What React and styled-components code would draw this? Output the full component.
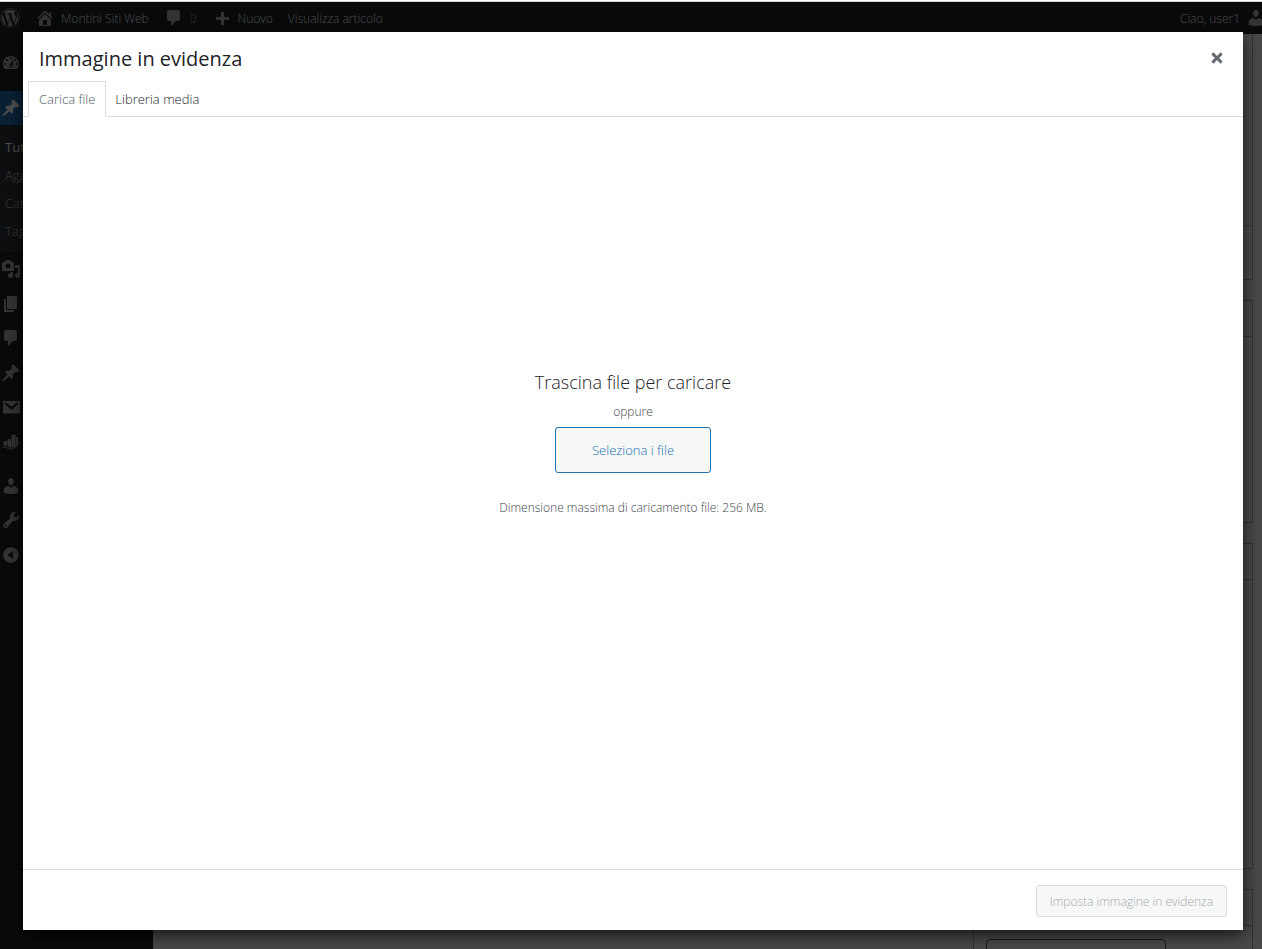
import styled, { createGlobalStyle } from "styled-components";
import { FaWordpress } from "react-icons/fa";

const paths = {
  dashboard:
    "M3.76 16h12.48c1.1-1.37 1.76-3.11 1.76-5 0-4.42-3.58-8-8-8s-8 3.58-8 8c0 1.89.66 3.63 1.76 5zM10 4c.55 0 1 .45 1 1s-.45 1-1 1-1-.45-1-1 .45-1 1-1zM6 6c.55 0 1 .45 1 1s-.45 1-1 1-1-.45-1-1 .45-1 1-1zm8 0c.55 0 1 .45 1 1s-.45 1-1 1-1-.45-1-1 .45-1 1-1zm-5.37 5.55L12 7v6c0 1.1-.9 2-2 2s-2-.9-2-2c0-.57.24-1.08.63-1.45zM4 10c.55 0 1 .45 1 1s-.45 1-1 1-1-.45-1-1 .45-1 1-1zm12 0c.55 0 1 .45 1 1s-.45 1-1 1-1-.45-1-1 .45-1 1-1zm-5 3c0-.55-.45-1-1-1s-1 .45-1 1 .45 1 1 1 1-.45 1-1z",
  pin: "M10.44 3.02l1.82-1.82 6.36 6.35-1.83 1.82c-1.05-.68-2.48-.57-3.41.36l-.75.75c-.92.93-1.04 2.35-.35 3.41l-1.83 1.82-2.41-2.41-2.8 2.79c-.42.42-3.38 2.71-3.8 2.29s1.86-3.39 2.28-3.81l2.79-2.79L4.1 9.36l1.83-1.82c1.05.69 2.48.57 3.4-.36l.75-.75c.93-.92 1.05-2.35.36-3.41z",
  media:
    "M13 11V4c0-.55-.45-1-1-1h-1.67L9 1H5L3.67 3H2c-.55 0-1 .45-1 1v7c0 .55.45 1 1 1h10c.55 0 1-.45 1-1zM7 4.5c1.38 0 2.5 1.12 2.5 2.5S8.38 9.5 7 9.5 4.5 8.38 4.5 7 5.62 4.5 7 4.5zM14 6h5v10.5c0 1.38-1.12 2.5-2.5 2.5S14 17.88 14 16.5s1.12-2.5 2.5-2.5c.17 0 .34.02.5.05V9h-3V6zm-4 8.05V13h2v3.5c0 1.38-1.12 2.5-2.5 2.5S7 17.88 7 16.5 8.12 14 9.5 14c.17 0 .34.02.5.05z",
  pages: "M6 15V2h10v13H6zm-1 1h8v2H3V5h2v11z",
  comments:
    "M5 2h9c1.1 0 2 .9 2 2v7c0 1.1-.9 2-2 2h-2l-5 5v-5H5c-1.1 0-2-.9-2-2V4c0-1.1.9-2 2-2z",
  mail: "M2 4h17v12.500H2zM10.500 12.800l7-5.900-1-1.600-6 4.300-6-4.300-1 1.600z",
  chart:
    "M2.500 9.200h3.600v4.800c-1.200-.3-2.400-.2-3.600.2zM6.600 7.200h3.500v8.700c-1.200-.2-2.200-1.200-3.500-1.700zM10.600 4c0-.8.4-1.300 1.200-1.300h1.600c.8 0 1.200.5 1.200 1.300v9.200c-1.300 1.100-2.500 2-4 2.600zM15.100 5h1.200c.5 0 .8.3.8.8v5.400l-2 1.500zM0 16.800c1.800-2.300 4.200-2.700 6.400-1.200 2.300 1.600 4.300 1.400 6.600-.6 2.300-2 3.600-4 7-4.200-1.800 1.300-3.200 2.900-4.900 4.300-3.200 2.700-6.100 3.300-9.300 1.100-1.900-1.200-3.700-.7-5.800.6z",
  users:
    "M10 9.25c-2.27 0-2.73-3.44-2.73-3.44C7 4.02 7.82 2 9.97 2c2.16 0 2.98 2.02 2.71 3.81 0 0-.41 3.44-2.68 3.44zm0 2.57L12.72 10c2.39 0 4.52 2.33 4.52 4.53v2.49s-3.65 1.13-7.24 1.13c-3.65 0-7.24-1.13-7.24-1.13v-2.49c0-2.25 1.94-4.48 4.47-4.48z",
  tools:
    "M16.68 9.77c-1.34 1.34-3.3 1.67-4.95.99l-5.41 6.52c-.99.99-2.59.99-3.58 0s-.99-2.59 0-3.57l6.52-5.42c-.68-1.65-.35-3.61.99-4.95 1.28-1.28 3.12-1.62 4.72-1.06l-2.89 2.89 2.82 2.82 2.86-2.87c.53 1.58.18 3.39-1.08 4.65zM3.81 16.21c.4.39 1.04.39 1.43 0 .4-.4.4-1.04 0-1.43-.39-.4-1.03-.4-1.43 0-.39.39-.39 1.03 0 1.43z",
  collapse:
    "M10 2.16c4.33 0 7.84 3.51 7.84 7.84s-3.51 7.84-7.84 7.84S2.16 14.33 2.16 10 5.71 2.16 10 2.16zm2 11.72V6.12L6.18 9.97z",
  home: "M16 8.5l1.53 1.53-1.06 1.06L10 4.6l-6.47 6.49-1.06-1.06L10 2.5l4 4v-2h2v4zm-6-2.46l6 5.99V18H4v-5.97zM12 17v-5H8v5h4z",
  plus: "M17 9v3h-5v5H9v-5H4V9h5V4h3v5z",
  close:
    "M12.12 10l3.53 3.53-2.12 2.12L10 12.12l-3.54 3.54-2.12-2.12L7.88 10 4.34 6.46l2.12-2.12L10 7.88l3.54-3.53 2.12 2.12z",
};

const Icon = ({ name }) => (
  <Glyph viewBox="0 0 20 20" aria-hidden="true">
    <path d={paths[name]} fillRule="evenodd" />
  </Glyph>
);

const mainMenu = [
  ["media", "Media"],
  ["pages", "Pagine"],
  ["comments", "Commenti"],
  ["pin", "Progetti"],
  ["mail", "Contatti"],
  ["chart", "Statistiche"],
];

const toolsMenu = [
  ["users", "Utenti"],
  ["tools", "Strumenti"],
  ["collapse", "Riduci menu"],
];

const App = () => {
  return (
    <Page>
      <GlobalStyle />
      <TopEdge />
      <AdminBar>
        <BarLink href="#wordpress" aria-label="WordPress">
          <FaWordpress size={20} />
        </BarLink>
        <BarLink href="#sito">
          <Icon name="home" />
          <span>Montini Siti Web</span>
        </BarLink>
        <BarLink href="#commenti">
          <Icon name="comments" />
          <Count>0</Count>
        </BarLink>
        <BarLink href="#nuovo">
          <Icon name="plus" />
          <span>Nuovo</span>
        </BarLink>
        <BarLink href="#articolo">
          <span>Visualizza articolo</span>
        </BarLink>
        <Account href="#profilo">
          <span>Ciao, user1</span>
          <Icon name="users" />
        </Account>
      </AdminBar>

      <Body>
        <SideMenu>
          <MenuItem href="#bacheca" aria-label="Bacheca">
            <Icon name="dashboard" />
          </MenuItem>
          <Separator />
          <MenuItem href="#articoli" aria-label="Articoli" $active>
            <Icon name="pin" />
          </MenuItem>
          <SubMenu>
            <SubLink href="#tutti" $current>
              Tutti gli articoli
            </SubLink>
            <SubLink href="#aggiungi">Aggiungi nuovo</SubLink>
            <SubLink href="#categorie">Categorie</SubLink>
            <SubLink href="#tag">Tag</SubLink>
          </SubMenu>
          <MenuGroup $height={207}>
            {mainMenu.map(([icon, label]) => (
              <MenuItem key={label} href={"#" + icon} aria-label={label}>
                <Icon name={icon} />
              </MenuItem>
            ))}
          </MenuGroup>
          <Separator />
          <MenuGroup $height={103}>
            {toolsMenu.map(([icon, label]) => (
              <MenuItem key={label} href={"#" + icon} aria-label={label}>
                <Icon name={icon} />
              </MenuItem>
            ))}
          </MenuGroup>
        </SideMenu>
        <Editor>
          <MetaColumn>
            <MetaBox $height={246} $first>
              <MetaHead $height={192} />
            </MetaBox>
            <MetaBox $height={223}>
              <MetaHead $height={36} />
            </MetaBox>
            <MetaBox $height={326}>
              <MetaHead $height={36} />
            </MetaBox>
            <MetaBox $height={225}>
              <MetaHead $height={36} />
              <MetaInput type="text" aria-label="Nuovo tag" />
            </MetaBox>
          </MetaColumn>
        </Editor>
      </Body>

      <Backdrop>
        <Modal role="dialog" aria-labelledby="modal-title">
          <ModalHeader>
            <Title id="modal-title">Immagine in evidenza</Title>
            <CloseButton type="button" aria-label="Chiudi">
              <Icon name="close" />
            </CloseButton>
          </ModalHeader>
          <Tabs role="tablist">
            <Tab type="button" role="tab" aria-selected="true" $active>
              Carica file
            </Tab>
            <Tab type="button" role="tab" aria-selected="false">
              Libreria media
            </Tab>
          </Tabs>
          <Uploader>
            <DropTitle>Trascina file per caricare</DropTitle>
            <Note>oppure</Note>
            <SelectButton type="button">Seleziona i file</SelectButton>
            <Note>Dimensione massima di caricamento file: 256 MB.</Note>
          </Uploader>
          <ModalFooter>
            <SubmitButton type="button" disabled>
              Imposta immagine in evidenza
            </SubmitButton>
          </ModalFooter>
        </Modal>
      </Backdrop>
    </Page>
  );
};

const GlobalStyle = createGlobalStyle`
  * {
    box-sizing: border-box;
  }

  body {
    margin: 0;
    overflow: hidden;
    font-family: "Open Sans", "Noto Sans", sans-serif;
    font-size: 13px;
    font-weight: 300;
    background: #f0f0f1;
  }

  button,
  input {
    font: inherit;
  }

  a {
    text-decoration: none;
  }
`;

const Page = styled.div`
  position: relative;
  display: flex;
  flex-direction: column;
  height: 100vh;
  overflow: hidden;
`;

const TopEdge = styled.div`
  flex: none;
  height: 2px;
  background: #ffffff;
  border-bottom: 1px solid #ccd4d8;
`;

const Glyph = styled.svg`
  flex: none;
  width: 20px;
  height: 20px;
  fill: currentColor;
`;

const AdminBar = styled.header`
  flex: none;
  display: flex;
  align-items: center;
  gap: 15px;
  height: 32px;
  font-size: 12px;
  background: #1d2327;
  overflow: hidden;
`;

const BarLink = styled.a`
  display: flex;
  align-items: center;
  gap: 6px;
  color: #a7aaad;
  white-space: nowrap;

  span {
    color: #f0f0f1;
  }
`;

const Count = styled.span`
  opacity: 0.6;
`;

const Account = styled(BarLink)`
  margin-left: auto;
  margin-right: -4px;
`;

const Body = styled.div`
  flex: 1;
  display: flex;
  min-height: 0;
`;

const SideMenu = styled.nav`
  flex: none;
  width: 153px;
  padding-top: 12px;
  background: #1d2327;
`;

const MenuGroup = styled.div`
  display: flex;
  flex-direction: column;
  height: ${(props) => props.$height}px;

  a {
    flex: 1;
  }
`;

const MenuItem = styled.a`
  display: flex;
  align-items: center;
  height: 34px;
  padding-left: 1px;
  color: ${(props) => (props.$active ? "#ffffff" : "#a7aaad")};
  background: ${(props) => (props.$active ? "#2271b1" : "transparent")};
`;

const Separator = styled.div`
  height: 10px;

  &:nth-child(2) {
    height: 11px;
  }
`;

const SubMenu = styled.div`
  padding: 8px 0 7px 5px;
  background: #2c3338;
`;

const SubLink = styled.a`
  display: block;
  line-height: 28px;
  color: ${(props) => (props.$current ? "#ffffff" : "#c3c4c7")};
  font-weight: ${(props) => (props.$current ? 400 : 300)};
`;

const Editor = styled.main`
  flex: 1;
  display: flex;
  justify-content: flex-end;
  padding-right: 9px;
`;

const MetaColumn = styled.div`
  width: 280px;
  display: flex;
  flex-direction: column;
  gap: 20px;
`;

const MetaBox = styled.section`
  flex: none;
  height: ${(props) => props.$height}px;
  background: #f6f6f6;
  border: 1px solid #a8a9ac;
  border-top-width: ${(props) => (props.$first ? 0 : 1)}px;
`;

const MetaHead = styled.div`
  height: ${(props) => props.$height}px;
  border-bottom: 1px solid #a8a9ac;
`;

const MetaInput = styled.input`
  width: 180px;
  height: 30px;
  margin: 13px 12px;
  background: #f6f6f6;
  border: 1px solid #55585c;
  border-radius: 4px;
`;

const Backdrop = styled.div`
  position: absolute;
  inset: 2px 0 0;
  display: flex;
  padding: 30px 19px 19px 23px;
  background: rgba(0, 0, 0, 0.7);
`;

const Modal = styled.section`
  flex: 1;
  display: flex;
  flex-direction: column;
  background: #ffffff;
  box-shadow: 0 5px 15px rgba(0, 0, 0, 0.7);
`;

const ModalHeader = styled.header`
  display: flex;
  align-items: center;
  justify-content: space-between;
  height: 49px;
  padding: 3px 16px 0;
`;

const Title = styled.h1`
  margin: 0;
  font-size: 20px;
  font-weight: 400;
  color: #1d2327;
`;

const CloseButton = styled.button`
  display: flex;
  padding: 0;
  border: 0;
  background: none;
  color: #646970;
`;

const Tabs = styled.div`
  display: flex;
  padding: 0 5px;
  border-bottom: 1px solid #dcdcde;
`;

const Tab = styled.button`
  height: 36px;
  margin-bottom: -1px;
  padding: 0 ${(props) => (props.$active ? 10 : 8)}px;
  border: 1px solid ${(props) => (props.$active ? "#dcdcde" : "transparent")};
  border-bottom-color: ${(props) => (props.$active ? "#ffffff" : "transparent")};
  background: ${(props) => (props.$active ? "#ffffff" : "transparent")};
  color: ${(props) => (props.$active ? "#50575e" : "#1d2327")};
`;

const Uploader = styled.div`
  flex: 1;
  display: flex;
  flex-direction: column;
  align-items: center;
  justify-content: center;
  padding-bottom: 102px;
`;

const DropTitle = styled.h2`
  margin: 0 0 7px;
  font-size: 18px;
  font-weight: 300;
  line-height: 28px;
  color: #1d2327;
`;

const Note = styled.p`
  margin: 0;
  font-size: 12px;
  line-height: 18px;
  color: #3c434a;
`;

const SelectButton = styled.button`
  height: 46px;
  margin: 6px 0 26px;
  padding: 0 36px;
  border: 1px solid #2271b1;
  border-radius: 3px;
  background: #f6f7f7;
  color: #2271b1;
`;

const ModalFooter = styled.footer`
  display: flex;
  justify-content: flex-end;
  padding: 15px 16px 13px;
  border-top: 1px solid #dcdcde;
`;

const SubmitButton = styled.button`
  height: 32px;
  padding: 0 13px;
  border: 1px solid #dcdcde;
  border-radius: 3px;
  background: #f6f7f7;
  font-size: 12px;
  color: #a7aaad;
`;

export default App;
